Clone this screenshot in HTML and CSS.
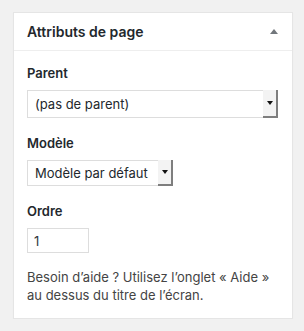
FILE: index.html
```html
<!DOCTYPE html>
<html lang="fr">
<head>
    <meta charset="UTF-8">
    <title>Attributs de page</title>
    <link rel="stylesheet" href="styles.css">
</head>
<body>
    <div class="postbox">
        <div class="hndle">
            <span class="hndle-title">Attributs de page</span>
            <span class="toggle-arrow"></span>
        </div>
        <div class="inside">
            <p class="attr-label first">Parent</p>
            <div class="select-wrap wide">
                <select class="select-box">
                    <option>(pas de parent)</option>
                </select>
                <span class="select-arrow"><span class="caret"></span></span>
            </div>

            <p class="attr-label">Modèle</p>
            <div class="select-wrap narrow">
                <select class="select-box">
                    <option>Modèle par défaut</option>
                </select>
                <span class="select-arrow"><span class="caret"></span></span>
            </div>

            <p class="attr-label">Ordre</p>
            <input class="order-input" type="text" value="1">

            <p class="help-text">Besoin d’aide ? Utilisez l’onglet « Aide » au dessus du titre de l’écran.</p>
        </div>
    </div>
</body>
</html>
```

FILE: styles.css
```css
body {
    background: #f1f1f1;
    margin: 0;
    font-family: Inter, "Liberation Sans", sans-serif;
    color: #23282d;
}

.postbox {
    margin: 12px 0 0 13px;
    width: 278px;
    background: #fff;
    border: 1px solid #e5e5e5;
    box-shadow: 0 1px 1px rgba(0, 0, 0, 0.04);
}

.hndle {
    display: flex;
    align-items: center;
    justify-content: space-between;
    height: 36px;
    padding: 1px 14px 0 13px;
    border-bottom: 1px solid #eee;
}

.hndle-title {
    font-size: 14px;
    font-weight: 600;
    line-height: 20px;
}

.toggle-arrow {
    width: 0;
    height: 0;
    border-left: 4px solid transparent;
    border-right: 4px solid transparent;
    border-bottom: 5px solid #72777c;
    margin-top: -2px;
}

.inside {
    padding: 0 12px 14px 13px;
}

.attr-label {
    margin: 16px 0 8px;
    font-size: 13px;
    font-weight: 600;
    line-height: 18px;
}

.attr-label.first {
    margin-top: 13px;
}

.select-wrap {
    display: flex;
    border: 1px solid #ddd;
    background: #fff;
    box-sizing: border-box;
}

.select-wrap.wide {
    width: 251px;
    height: 28px;
}

.select-wrap.narrow {
    width: 146px;
    height: 26px;
}

.select-box {
    flex: 1;
    min-width: 0;
    appearance: none;
    -webkit-appearance: none;
    border: none;
    outline: none;
    background: transparent;
    padding: 0 0 0 7px;
    font-family: inherit;
    font-size: 13px;
    color: #23282d;
}

.select-arrow {
    width: 13px;
    display: flex;
    align-items: center;
    justify-content: center;
    background: #f3f3f3;
    border-right: 2px solid #7e7e7e;
    border-bottom: 2px solid #7e7e7e;
    margin: -1px -1px -1px 0;
}

.caret {
    width: 0;
    height: 0;
    border-left: 3px solid transparent;
    border-right: 3px solid transparent;
    border-top: 4px solid #111;
}

.order-input {
    display: block;
    box-sizing: border-box;
    width: 62px;
    height: 25px;
    border: 1px solid #ddd;
    padding: 0 6px;
    font-family: inherit;
    font-size: 13px;
    color: #32373c;
    outline: none;
}

.help-text {
    margin: 15px 0 0;
    font-size: 13px;
    line-height: 18px;
    color: #444;
}
```
